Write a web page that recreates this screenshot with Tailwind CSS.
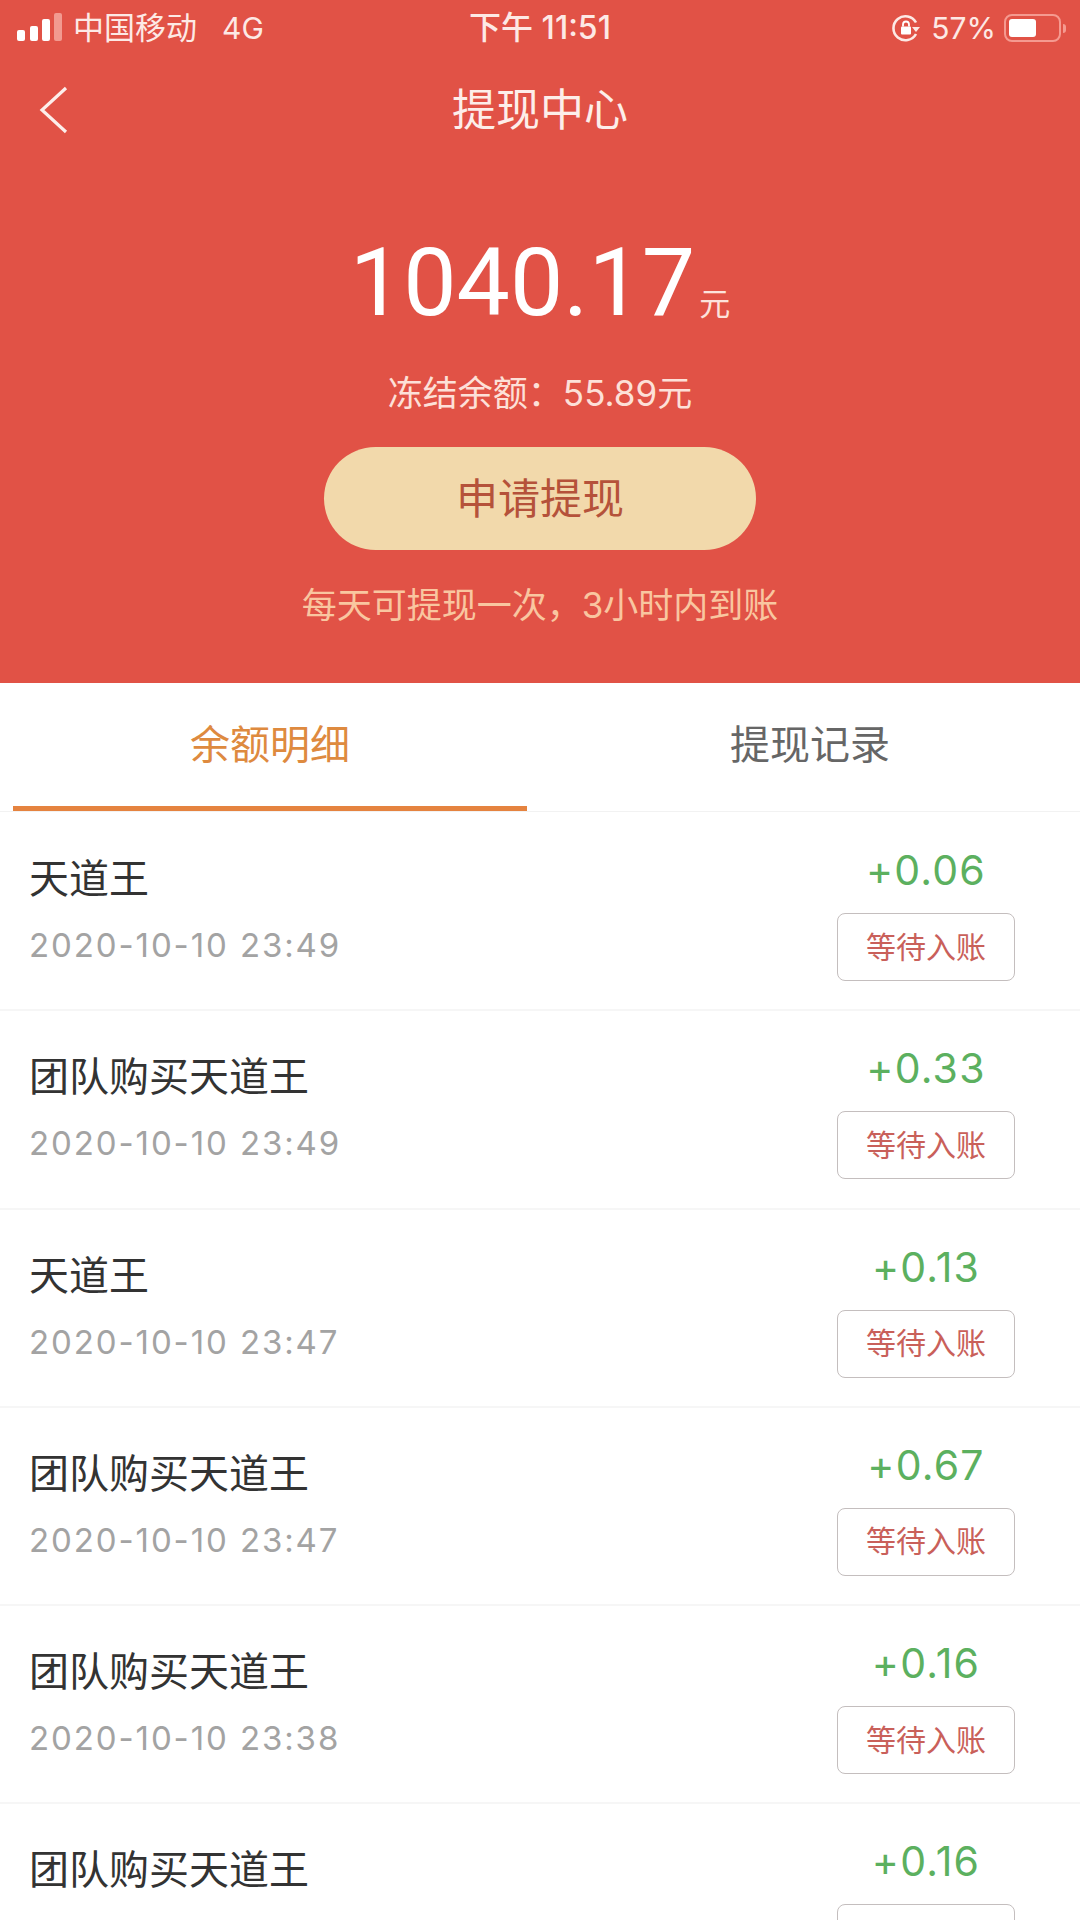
<!DOCTYPE html>
<html lang="zh-CN">
<head>
  <meta charset="UTF-8" />
  <meta name="viewport" content="width=device-width, initial-scale=1.0"/>
  <title>提现中心</title>
  <script src="https://cdn.jsdelivr.net/npm/@tailwindcss/browser@4"></script>
</head>
<body class="bg-white">
<div class="w-[1080px] h-[1920px] overflow-hidden bg-white font-['Inter','Noto_Sans_CJK_SC',sans-serif]">

  <!-- Red header -->
  <header class="h-[683px] bg-[#e15246] flex flex-col items-center">
    <!-- Status bar -->
    <div class="w-full h-14 grid grid-cols-[1fr_auto_1fr] items-center text-[30px] text-[#fde9e5]">
      <div class="flex items-center pl-[17px]">
        <svg width="46" height="30" viewBox="0 0 46 30" class="mr-[10px]">
          <rect x="0" y="17" width="8" height="11" rx="2" fill="#fff"/>
          <rect x="13" y="13" width="8" height="15" rx="2" fill="#fff"/>
          <rect x="25" y="6" width="8" height="22" rx="2" fill="#fff"/>
          <rect x="37" y="0" width="8" height="28" rx="2" fill="#f29a90"/>
        </svg>
        <span class="text-[31px]">中国移动</span>
        <span class="ml-[25px]">4G</span>
      </div>
      <div class="font-medium text-[32px]">下午 11:51</div>
      <div class="flex items-center justify-end pr-[14px]">
        <svg width="30" height="30" viewBox="0 0 30 30" class="mr-[10px]">
          <path d="M25 9.5A12 12 0 1 0 25 21" fill="none" stroke="#fde9e5" stroke-width="2.6"/>
          <path d="M21 14h8l-4 5z" fill="#fde9e5"/>
          <rect x="10" y="13.5" width="10" height="8" rx="1" fill="#fff"/>
          <path d="M12 13.5v-2a3 3 0 0 1 6 0v2" fill="none" stroke="#fff" stroke-width="1.8"/>
        </svg>
        <span>57%</span>
        <div class="ml-2 w-[57px] h-7 rounded-lg border-2 border-[#f59a90] p-[3px]">
          <div class="w-[27px] h-full rounded-[3px] bg-white"></div>
        </div>
        <div class="ml-[2px] w-[3px] h-[9px] rounded-r-sm bg-[#f59a90]"></div>
      </div>
    </div>

    <!-- Nav -->
    <div class="w-full h-[108px] grid grid-cols-[1fr_auto_1fr] items-center">
      <svg width="30" height="50" viewBox="0 0 30 50" class="ml-[39px]">
        <path d="M27 3L3 25l24 22" fill="none" stroke="#fdeeea" stroke-width="3.2"/>
      </svg>
      <h1 class="text-[44px] leading-none text-[#fdeeea]">提现中心</h1>
    </div>

    <!-- Balance -->
    <div class="mt-[59px] h-[120px] flex items-baseline leading-[120px] text-white">
      <span class="text-[95px] font-['Roboto','Inter',sans-serif]">1040.17</span>
      <span class="ml-[4px] text-[31px] text-[#fde3dc]">元</span>
    </div>
    <p class="mt-[25px] h-[50px] leading-[50px] text-[35px] text-[#fde0d8]">冻结余额：55.89元</p>
    <button class="mt-[29px] w-[432px] h-[103px] rounded-full bg-[#f2d9ab] text-[42px] text-[#b5523a]">申请提现</button>
    <p class="mt-[30px] h-[50px] leading-[50px] text-[35px] text-[#f9c6a0]">每天可提现一次，3小时内到账</p>
  </header>

  <!-- Tabs -->
  <nav class="h-[128px] grid grid-cols-2 shadow-[0_1px_0_#f2f2f2] text-[40px]">
    <div class="px-[13px]">
      <div class="h-[123px] flex items-center justify-center text-[#de8a3f]">余额明细</div>
      <div class="h-[5px] bg-[#e5833f]"></div>
    </div>
    <div class="h-[123px] flex items-center justify-center text-[#666666]">提现记录</div>
  </nav>

  <!-- Rows -->
  <ul>
    <li class="h-[198.3px] flex justify-between shadow-[0_2px_0_#f6f6f6]">
      <div class="pl-[29px] pt-[43px]">
        <div class="h-[50px] leading-[50px] text-[40px] text-[#333333]">天道王</div>
        <div class="mt-[16px] h-[50px] leading-[50px] text-[33px] text-[#a3a3a3] tracking-[1.9px]">2020-10-10 23:49</div>
      </div>
      <div class="w-[178px] mr-[65px] pt-[34px] flex flex-col items-center">
        <div class="h-[50px] leading-[50px] text-[41px] tracking-[1.2px] text-[#5cb05f]">+0.06</div>
        <div class="mt-[18px] w-[178px] h-[68px] flex items-center justify-center rounded-lg border border-[#c4bebe] text-[30px] text-[#c9605a]">等待入账</div>
      </div>
    </li>
    <li class="h-[198.3px] flex justify-between shadow-[0_2px_0_#f6f6f6]">
      <div class="pl-[29px] pt-[43px]">
        <div class="h-[50px] leading-[50px] text-[40px] text-[#333333]">团队购买天道王</div>
        <div class="mt-[16px] h-[50px] leading-[50px] text-[33px] text-[#a3a3a3] tracking-[1.9px]">2020-10-10 23:49</div>
      </div>
      <div class="w-[178px] mr-[65px] pt-[34px] flex flex-col items-center">
        <div class="h-[50px] leading-[50px] text-[41px] tracking-[1.2px] text-[#5cb05f]">+0.33</div>
        <div class="mt-[18px] w-[178px] h-[68px] flex items-center justify-center rounded-lg border border-[#c4bebe] text-[30px] text-[#c9605a]">等待入账</div>
      </div>
    </li>
    <li class="h-[198.3px] flex justify-between shadow-[0_2px_0_#f6f6f6]">
      <div class="pl-[29px] pt-[43px]">
        <div class="h-[50px] leading-[50px] text-[40px] text-[#333333]">天道王</div>
        <div class="mt-[16px] h-[50px] leading-[50px] text-[33px] text-[#a3a3a3] tracking-[1.9px]">2020-10-10 23:47</div>
      </div>
      <div class="w-[178px] mr-[65px] pt-[34px] flex flex-col items-center">
        <div class="h-[50px] leading-[50px] text-[41px] tracking-[1.2px] text-[#5cb05f]">+0.13</div>
        <div class="mt-[18px] w-[178px] h-[68px] flex items-center justify-center rounded-lg border border-[#c4bebe] text-[30px] text-[#c9605a]">等待入账</div>
      </div>
    </li>
    <li class="h-[198.3px] flex justify-between shadow-[0_2px_0_#f6f6f6]">
      <div class="pl-[29px] pt-[43px]">
        <div class="h-[50px] leading-[50px] text-[40px] text-[#333333]">团队购买天道王</div>
        <div class="mt-[16px] h-[50px] leading-[50px] text-[33px] text-[#a3a3a3] tracking-[1.9px]">2020-10-10 23:47</div>
      </div>
      <div class="w-[178px] mr-[65px] pt-[34px] flex flex-col items-center">
        <div class="h-[50px] leading-[50px] text-[41px] tracking-[1.2px] text-[#5cb05f]">+0.67</div>
        <div class="mt-[18px] w-[178px] h-[68px] flex items-center justify-center rounded-lg border border-[#c4bebe] text-[30px] text-[#c9605a]">等待入账</div>
      </div>
    </li>
    <li class="h-[198.3px] flex justify-between shadow-[0_2px_0_#f6f6f6]">
      <div class="pl-[29px] pt-[43px]">
        <div class="h-[50px] leading-[50px] text-[40px] text-[#333333]">团队购买天道王</div>
        <div class="mt-[16px] h-[50px] leading-[50px] text-[33px] text-[#a3a3a3] tracking-[1.9px]">2020-10-10 23:38</div>
      </div>
      <div class="w-[178px] mr-[65px] pt-[34px] flex flex-col items-center">
        <div class="h-[50px] leading-[50px] text-[41px] tracking-[1.2px] text-[#5cb05f]">+0.16</div>
        <div class="mt-[18px] w-[178px] h-[68px] flex items-center justify-center rounded-lg border border-[#c4bebe] text-[30px] text-[#c9605a]">等待入账</div>
      </div>
    </li>
    <!-- last row runs off the bottom of the screen -->
    <li class="h-[198.3px] flex justify-between">
      <div class="pl-[29px] pt-[43px]">
        <div class="h-[50px] leading-[50px] text-[40px] text-[#333333]">团队购买天道王</div>
      </div>
      <div class="w-[178px] mr-[65px] pt-[34px] flex flex-col items-center">
        <div class="h-[50px] leading-[50px] text-[41px] tracking-[1.2px] text-[#5cb05f]">+0.16</div>
        <div class="mt-[18px] w-[178px] h-[68px] rounded-lg border border-[#c4bebe]"></div>
      </div>
    </li>
  </ul>
</div>
</body>
</html>
